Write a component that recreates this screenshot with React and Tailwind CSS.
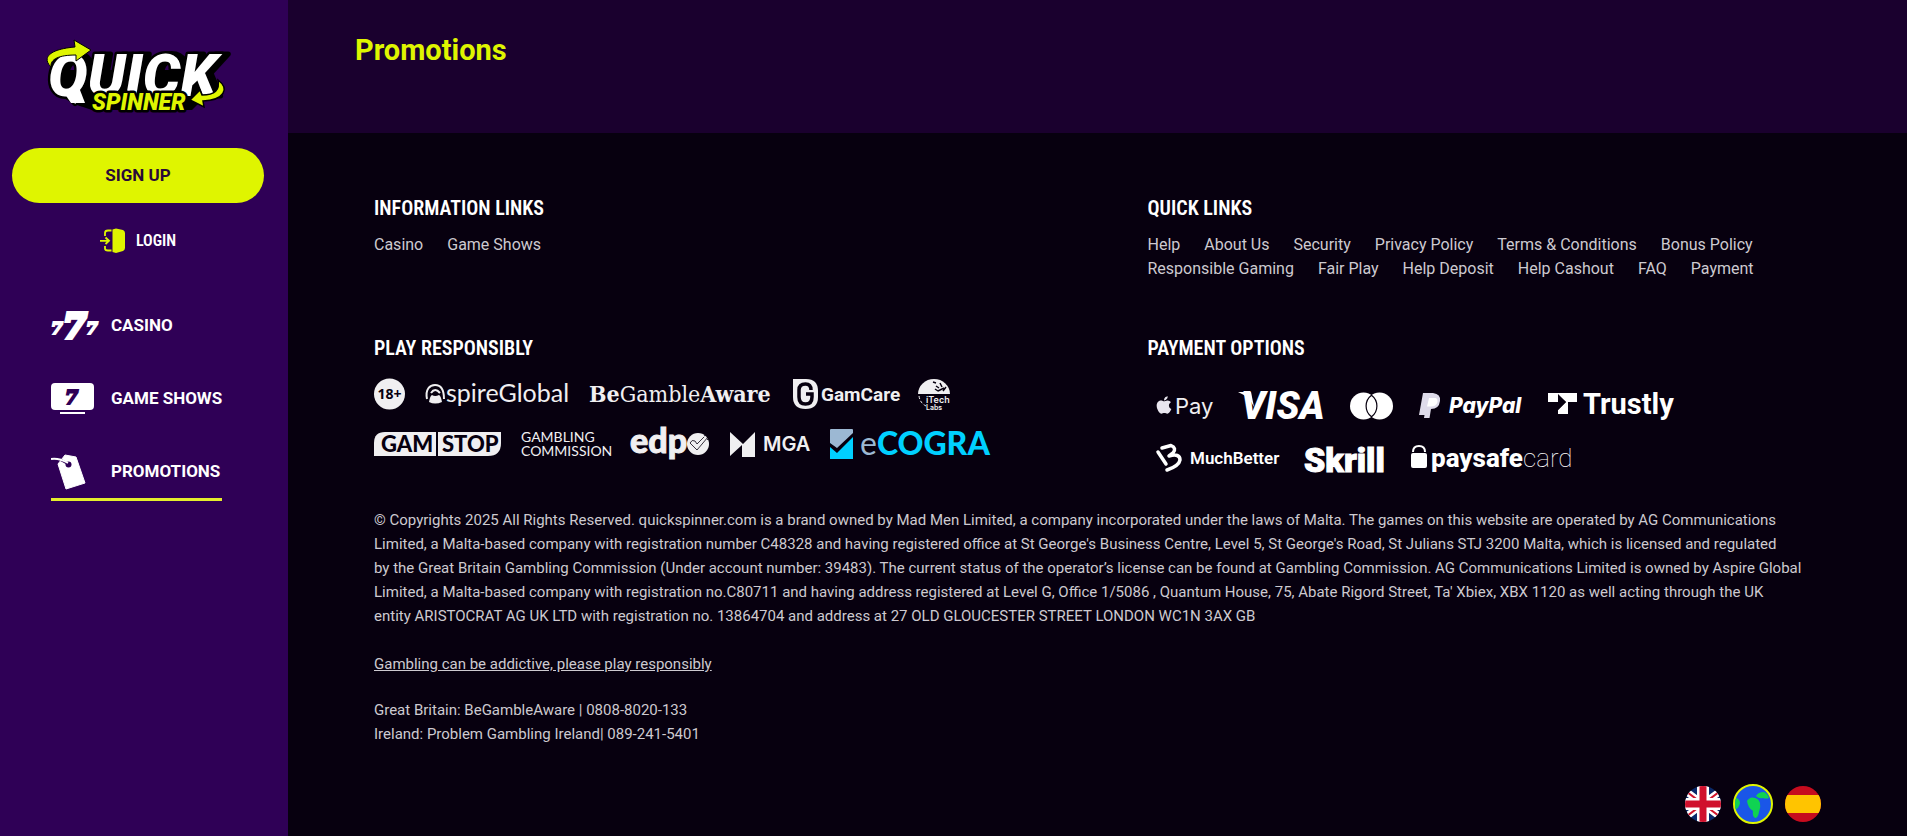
import React, { useState } from "react";
import { FaApple } from "react-icons/fa";

const infoLinks = ["Casino", "Game Shows"];

const quickLinks = [
  "Help",
  "About Us",
  "Security",
  "Privacy Policy",
  "Terms & Conditions",
  "Bonus Policy",
  "Responsible Gaming",
  "Fair Play",
  "Help Deposit",
  "Help Cashout",
  "FAQ",
  "Payment",
];

function QuickSpinnerLogo() {
  return (
    <svg width="190" height="78" viewBox="44 38 190 78" role="img" aria-label="Quick Spinner" className="overflow-visible">
      {/* Wordmark */}
      <g className="font-[Roboto] font-black italic [paint-order:stroke]" strokeLinejoin="round">
        <g className="drop-shadow-[6px_0px_0px_#000]">
          <path d="M54 92 L74 104 L92 110 L186 110 L196 100 L190 70 L66 70Z" fill="#000" />
          <text x="48" y="96" fontSize="59" fill="#fff" stroke="#000" strokeWidth="5">QUICK</text>
          <path d="M62 90 L80 90 L85 103 L71 103Z" fill="#fff" />
        </g>
        <text x="92" y="110" fontSize="23" fill="#dff500" stroke="#000" strokeWidth="5">SPINNER</text>
      </g>
      {/* Spinning arrows */}
      <path
        d="M51 67 C41 57 51 49 75 47 L74 40 L91 50 L76 61 L76 55 C59 55 50 59 51 67Z"
        fill="#dff500"
        stroke="#000"
        strokeWidth="1"
      />
      <path
        d="M218 80 C230 89 224 100 203 101 L204 107 L190 100 L200 90 L202 95 C215 95 220 90 218 80Z"
        fill="#dff500"
        stroke="#000"
        strokeWidth="1.5"
      />
    </svg>
  );
}

function SevensIcon() {
  return (
    <svg width="48" height="28" viewBox="0 0 48 28" aria-hidden="true" className="overflow-visible">
      <g className="font-['DejaVu_Serif'] font-bold italic" fill="#fff" stroke="#fff">
        <text x="0" y="22" fontSize="17" strokeWidth="2">7</text>
        <text x="12" y="26" fontSize="34" strokeWidth="4">7</text>
        <text x="35" y="22" fontSize="17" strokeWidth="2">7</text>
      </g>
    </svg>
  );
}

function ScreenIcon() {
  return (
    <svg width="48" height="32" viewBox="0 0 48 32" aria-hidden="true">
      <rect width="43" height="27" rx="4" fill="#fff" />
      <rect x="9" y="29" width="25" height="2" fill="#fff" />
      <text x="14" y="21" fontSize="19" fill="#2f0056" stroke="#2f0056" strokeWidth="2" className="font-['DejaVu_Serif'] font-bold italic">7</text>
    </svg>
  );
}

function TagIcon() {
  return (
    <svg width="48" height="36" viewBox="0 0 48 36" aria-hidden="true">
      <path d="M14 1 L25 3 L34 29 L15 35 L7 10Z" fill="#fff" stroke="#fff" strokeLinejoin="round" />
      <circle cx="17.500" cy="10.500" r="3" fill="#2f0056" />
      <path d="M10 6 L19 11" stroke="#2f0056" strokeWidth="2.500" />
      <path d="M0 5 C6 4 10 5 17 9" stroke="#fff" strokeWidth="1.800" fill="none" />
    </svg>
  );
}

function LoginIcon() {
  return (
    <svg width="26" height="26" viewBox="0 0 26 26" aria-hidden="true">
      <path d="M12.500 1.500 L16 0.500 L23 2 Q25 3 25 5 V20 Q25 22 23 23 L16 25 L12.500 24Z" fill="#dff500" />
      <path d="M11.500 2.500 H8 Q5 2.500 5 5 V8 M5 18 V20.500 Q5 22.500 8 22.500 H11.500" fill="none" stroke="#dff500" strokeWidth="1.800" />
      <path d="M0 12.800 H8 M5.500 9.500 L9 12.800 L5.500 16" fill="none" stroke="#dff500" strokeWidth="1.800" />
    </svg>
  );
}

function Logo({ width, height = 32, label, children }) {
  return (
    <svg width={width} height={height} viewBox={`0 0 ${width} ${height}`} fill="#f0eff1" role="img" aria-label={label} className="overflow-visible">
      {children}
    </svg>
  );
}

function PlayLogos() {
  return (
    <div className="mt-4 flex flex-wrap gap-x-5 gap-y-[18px]">
      <Logo width={32} label="18+">
        <circle cx="15.500" cy="16" r="15.500" />
        <text x="15.500" y="21" textAnchor="middle" fontSize="14" fill="#07000f" className="font-['Open_Sans'] font-bold">18+</text>
      </Logo>

      <Logo width={143} label="Aspire Global">
        <path d="M1 21 C-1 11 4 7 9 7 C14 7 18 11 18 21" fill="none" stroke="#f0eff1" strokeWidth="2" />
        <path d="M3 24 Q4 18 6 17 Q9 19 13 17 Q15 18 16 24 Q9 27 3 24Z" />
        <path d="M5 15 Q9 9 14 15" fill="none" stroke="#f0eff1" strokeWidth="2" />
        <text x="20" y="24" fontSize="25" className="font-[Lato]">spireGlobal</text>
      </Logo>

      <Logo width={184} label="BeGambleAware">
        <text x="0" y="24" fontSize="23" className="font-['DejaVu_Serif_Condensed','DejaVu_Serif']">
          <tspan className="font-bold">Be</tspan>Gamble<tspan className="font-bold">Aware</tspan>
        </text>
      </Logo>

      <Logo width={105} label="GamCare">
        <path d="M0 1 H13 Q25 1 25 13 V19 Q25 31 12.500 31 Q0 31 0 19Z" />
        <path d="M18 12 Q18 6 12.500 6 Q6 6 6 12 V19 Q6 26 12.500 26 Q19 26 19 19 V16 H13" fill="none" stroke="#07000f" strokeWidth="3.500" />
        <text x="28" y="23" fontSize="19" className="font-[Roboto] font-bold">GamCare</text>
      </Logo>

      <Logo width={32} label="iTech Labs">
        <path d="M0 16 A16 15 0 0 1 32 16Z" />
        <path d="M15 4 l3 1 M18 8 l3 2 M22 5 l2 4 M20 13 l6 -3 M25 13 l3 -4 M17 11 l3 2" stroke="#07000f" strokeWidth="1.500" />
        <path d="M1 18 Q2 25 8 28" fill="none" stroke="#f0eff1" strokeDasharray="3 2" />
        <text x="8" y="25" fontSize="9" className="font-[Inter] font-semibold">iTech</text>
        <text x="8" y="32" fontSize="7" className="font-[Inter] font-semibold">Labs</text>
      </Logo>

      <Logo width={127} label="GamStop">
        <path d="M11 4 H62 V28 H0 V15 Q0 4 11 4Z" />
        <path d="M64 4 H127 V15 Q127 28 114 28 H64Z" />
        <text x="7" y="24" fontSize="22" fill="#07000f" className="font-[Lato] font-black">GAM</text>
        <text x="68" y="24" fontSize="22" fill="#07000f" className="font-[Lato] font-black">STOP</text>
      </Logo>

      <Logo width={89} label="Gambling Commission">
        <text x="0" y="14" fontSize="14" className="font-[Lato]">GAMBLING</text>
        <text x="0" y="28" fontSize="14" className="font-[Lato]">COMMISSION</text>
      </Logo>

      <Logo width={80} label="edpa">
        <text x="0" y="25" fontSize="34" stroke="#f0eff1" className="font-[Lato] font-black">edp</text>
        <circle cx="68" cy="16" r="11" />
        <path d="M60 15 L67 22 L78 9 M60 15 Q62 11 65 13 L67 16 L74 9 M74 8 l5 -3 M77 12 l3 -3" fill="none" stroke="#07000f" strokeWidth="0.800" />
      </Logo>

      <Logo width={80} label="MGA">
        <path d="M0 4 L13 16 L25 4 V29 H12 V17 L0 28Z" />
        <text x="33" y="23" fontSize="20" className="font-[Inter] font-semibold">MGA</text>
      </Logo>

      <Logo width={162} label="eCOGRA">
        <rect y="1" width="23" height="30" rx="1" fill="#9cb8d3" />
        <path d="M0 15 L7 21 L23 7 V31 H0Z" fill="#00d0ff" />
        <path d="M0 15 L7 20 L23 5 V9 L7 25 L0 19Z" fill="#07000f" />
        <text x="30" y="27" fontSize="32" fill="#00d0ff" className="font-[Lato] font-black">
          <tspan fill="#9cb8d3" className="font-normal">e</tspan>COGRA
        </text>
      </Logo>
    </div>
  );
}

function PaymentLogos() {
  return (
    <div className="mt-[29px] flex flex-wrap gap-x-[26px] gap-y-[23px] px-2">
      <Logo width={56} height={30} label="Apple Pay">
        <FaApple x="-2" y="4" size={20} color="#e9e6ef" />
        <text x="19" y="23" fontSize="22" className="font-[Inter] font-normal">Pay</text>
      </Logo>

      <Logo width={86} height={30} label="Visa">
        <g fill="#fff">
          <path d="M0 1 H13 L16 16 Q12 6 0 1Z" />
          <text x="3" y="28" fontSize="38" className="font-[Roboto] font-black italic">VISA</text>
        </g>
      </Logo>

      <Logo width={43} height={30} label="Mastercard">
        <circle cx="13.500" cy="15" r="13.500" fill="#fff" />
        <circle cx="29.500" cy="15" r="13.500" fill="#fff" />
        <path d="M21.500 4.200 A13.500 13.500 0 0 1 21.500 25.800 A13.500 13.500 0 0 1 21.500 4.200Z" fill="#fff" stroke="#07000f" strokeWidth="1.200" />
      </Logo>

      <Logo width={103} height={30} label="PayPal">
        <path d="M4 2 H14 Q22 3 21 10 Q20 18 12 18 L10.500 27 H5 L5.500 24 H0Z" fill="#dedbea" />
        <path d="M10 7 H17 Q19 8 18.500 11 Q17 16 11 15.500 H8Z" fill="#fff" />
        <text x="30" y="22" fontSize="21" fill="#fff" className="font-[Inter] font-extrabold italic">PayPal</text>
      </Logo>

      <Logo width={127} height={30} label="Trustly">
        <path d="M0 2 H29 V11 H20 V23 H10 V19 L18 11 L10 3 V11 H0Z" fill="#fff" />
        <path d="M10 4 L18 11 L10 19Z" fill="#07000f" />
        <text x="35" y="23" fontSize="29" fill="#fff" className="font-[Roboto] font-bold">Trustly</text>
      </Logo>

      <Logo width={122} height={30} label="MuchBetter">
        <path
          d="M2 8 L10 20 M6 4 L15 1.500 Q21 4 17 9 L13 12 Q24 9 24 16 Q23 22 11 26"
          fill="none"
          stroke="#fff"
          strokeWidth="3.500"
          strokeLinecap="round"
          strokeLinejoin="round"
        />
        <text x="34" y="20" fontSize="17" fill="#fff" className="font-[Roboto] font-semibold">MuchBetter</text>
      </Logo>

      <Logo width={81} height={30} label="Skrill">
        <text x="0" y="28" fontSize="34" fill="#fff" stroke="#fff" className="font-[Roboto] font-black">Skrill</text>
      </Logo>

      <Logo width={163} height={30} label="paysafecard">
        <rect y="9" width="16" height="15" rx="2" fill="#fff" />
        <path d="M2 8 Q2 2 8 2 Q14 2 14 8" fill="none" stroke="#fff" strokeWidth="2" />
        <text x="20" y="23" fontSize="26" fill="#fff" className="font-[Roboto]">
          <tspan className="font-extrabold">paysafe</tspan>
          <tspan className="font-thin">card</tspan>
        </text>
      </Logo>
    </div>
  );
}

function FlagUk() {
  return (
    <svg width="36" height="36" viewBox="0 0 36 36" aria-hidden="true">
      <clipPath id="uk"><circle cx="18" cy="18" r="18" /></clipPath>
      <g clipPath="url(#uk)">
        <rect width="36" height="36" fill="#0a2a6b" />
        <path d="M-2 3 L38 33 M38 3 L-2 33" stroke="#fff" strokeWidth="7" />
        <path d="M-2 3 L38 33 M38 3 L-2 33" stroke="#cf142b" strokeWidth="2" />
        <path d="M18 0 V36 M0 18 H36" stroke="#fff" strokeWidth="12" />
        <path d="M18 0 V36 M0 18 H36" stroke="#d0102c" strokeWidth="7" />
      </g>
    </svg>
  );
}

function Globe() {
  return (
    <svg width="40" height="40" viewBox="0 0 40 40" aria-hidden="true">
      <clipPath id="globe"><circle cx="20" cy="20" r="18" /></clipPath>
      <circle cx="20" cy="20" r="19" fill="#1a56e8" stroke="#dff500" strokeWidth="2" />
      <g clipPath="url(#globe)" fill="#0fd352">
        <path d="M23 12 Q25 8 31 8 Q35 10 36 14 Q33 15 30 14 Q26 15 23 12Z" />
        <path d="M14 17 Q17 12 22 14 Q26 15 27 19 Q28 23 26 28 Q25 34 22 34 Q19 32 20 27 Q15 24 14 17Z" />
        <path d="M0 13 Q7 14 7 19 Q6 25 1 26Z" />
      </g>
    </svg>
  );
}

function FlagSpain() {
  return (
    <svg width="36" height="36" viewBox="0 0 36 36" aria-hidden="true">
      <clipPath id="es"><circle cx="18" cy="18" r="18" /></clipPath>
      <g clipPath="url(#es)">
        <rect width="36" height="36" fill="#c60b1e" />
        <rect y="9" width="36" height="18" fill="#ffc400" />
      </g>
    </svg>
  );
}

const menu = [
  { name: "Casino", icon: <SevensIcon /> },
  { name: "Game Shows", icon: <ScreenIcon /> },
  { name: "Promotions", icon: <TagIcon /> },
];

const languages = [
  { name: "United Kingdom", icon: <FlagUk /> },
  { name: "International", icon: <Globe /> },
  { name: "Spain", icon: <FlagSpain /> },
];

function FooterTitle({ children }) {
  return (
    <h2 className="font-['Roboto_Condensed'] text-xl leading-7 font-semibold text-white uppercase">
      {children}
    </h2>
  );
}

function LinkList({ links }) {
  return (
    <ul className="mt-[11px] flex flex-wrap gap-x-6 text-base leading-6">
      {links.map((link) => (
        <li key={link}>
          <a href="#" className="hover:text-white">{link}</a>
        </li>
      ))}
    </ul>
  );
}

export default function App() {
  const [active, setActive] = useState("Promotions");

  return (
    <div className="flex min-h-screen bg-[#07000f] font-[Roboto,sans-serif]">
      {/* Sidebar */}
      <aside className="w-72 shrink-0 bg-[#2f0056] pt-[38px] pr-6 pl-3">
        <a href="#" className="ml-8 block w-fit">
          <QuickSpinnerLogo />
        </a>
        <button className="mt-8 h-[55px] w-full cursor-pointer rounded-full bg-[#dff500] text-[17px] font-bold text-[#2a0a38]">
          SIGN UP
        </button>
        <button className="mx-auto mt-6 flex h-7 cursor-pointer items-center gap-2.5 font-['Roboto_Condensed'] text-base font-semibold text-white">
          <LoginIcon />
          LOGIN
        </button>

        <nav className="mt-10 ml-[39px] flex w-fit flex-col gap-[13px]">
          {menu.map((item) => (
            <a
              key={item.name}
              href="#"
              onClick={() => setActive(item.name)}
              className={`flex h-[60px] items-center gap-3 border-b-3 pt-1 text-[17px] font-bold text-white uppercase ${
                active === item.name ? "border-[#e4ee2c]" : "border-transparent"
              }`}
            >
              {item.icon}
              {item.name}
            </a>
          ))}
        </nav>
      </aside>

      <div className="min-w-0 flex-1">
        <header className="h-[133px] bg-[#1a002e] pt-[30px] pl-[67px]">
          <h1 className="text-[29px] leading-10 font-bold text-[#dff500]">Promotions</h1>
        </header>

        {/* Footer */}
        <footer className="px-[86px] pt-[61px] pb-3 text-[#cdcad0]">
          <div className="grid grid-cols-2 gap-x-[100px] gap-y-[53px]">
            <section>
              <FooterTitle>Information Links</FooterTitle>
              <LinkList links={infoLinks} />
            </section>
            <section>
              <FooterTitle>Quick Links</FooterTitle>
              <LinkList links={quickLinks} />
            </section>
            <section>
              <FooterTitle>Play Responsibly</FooterTitle>
              <PlayLogos />
            </section>
            <section>
              <FooterTitle>Payment Options</FooterTitle>
              <PaymentLogos />
            </section>
          </div>

          <div className="mt-[34px] text-[15px] leading-6">
            <p>
              © Copyrights 2025 All Rights Reserved. quickspinner.com is a brand owned by Mad Men Limited, a company
              incorporated under the laws of Malta. The games on this website are operated by AG Communications
              <br />
              Limited, a Malta-based company with registration number C48328 and having registered office at St
              George's Business Centre, Level 5, St George's Road, St Julians STJ 3200 Malta, which is licensed and
              regulated
              <br />
              by the Great Britain Gambling Commission (Under account number: 39483). The current status of the
              operator’s license can be found at Gambling Commission. AG Communications Limited is owned by Aspire
              Global
              <br />
              Limited, a Malta-based company with registration no.C80711 and having address registered at Level G,
              Office 1/5086 , Quantum House, 75, Abate Rigord Street, Ta' Xbiex, XBX 1120 as well acting through the UK
              <br />
              entity ARISTOCRAT AG UK LTD with registration no. 13864704 and address at 27 OLD GLOUCESTER STREET LONDON
              WC1N 3AX GB
            </p>
            <p className="mt-6">
              <a href="#" className="underline">Gambling can be addictive, please play responsibly</a>
            </p>
            <p className="mt-[22px]">Great Britain: BeGambleAware | 0808-8020-133</p>
            <p>Ireland: Problem Gambling Ireland| 089-241-5401</p>
          </div>

          <div className="mt-[38px] flex items-center justify-end gap-3">
            {languages.map((lang) => (
              <button key={lang.name} aria-label={lang.name} className="cursor-pointer">
                {lang.icon}
              </button>
            ))}
          </div>
        </footer>
      </div>
    </div>
  );
}
